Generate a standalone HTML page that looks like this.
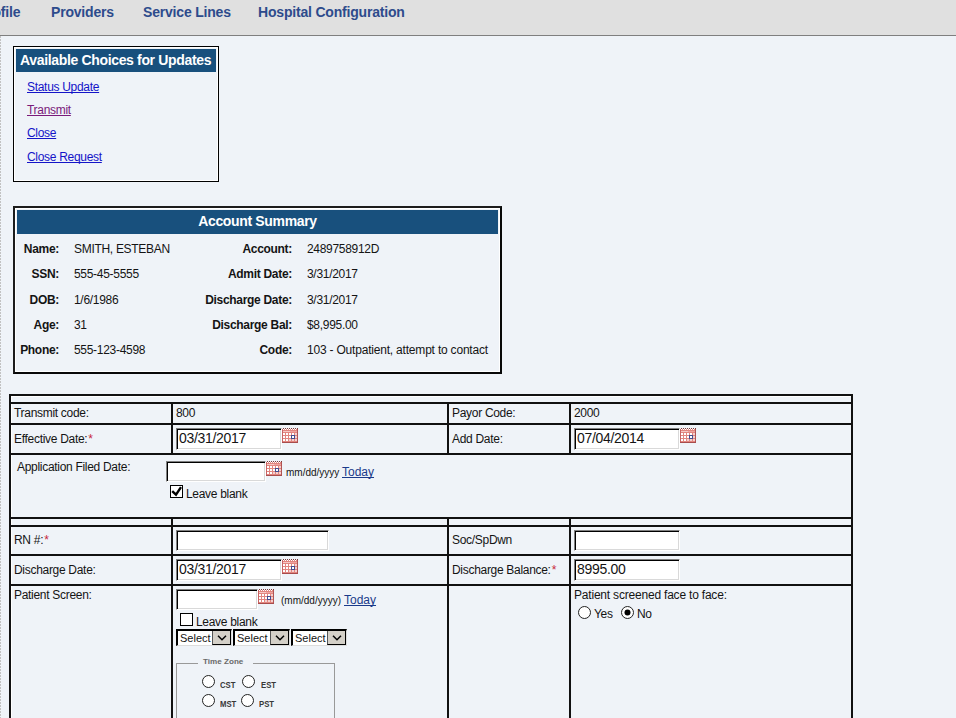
<!DOCTYPE html>
<html><head><meta charset="utf-8">
<style>
html,body{margin:0;padding:0;}
body{width:956px;height:718px;overflow:hidden;position:relative;background:#eff3f8;font-family:"Liberation Sans",sans-serif;color:#141414;}
.a{position:absolute;white-space:nowrap;}
#nav{left:0;top:0;width:956px;height:35px;background:#e0e0e0;border-bottom:1px solid #7f7f7f;}
.nv{font-size:14px;letter-spacing:-0.19px;font-weight:bold;color:#2d4b8c;line-height:16px;top:4px;}
#dots{left:0;top:36px;width:1px;height:682px;background:repeating-linear-gradient(#c2c2c2 0 2px,transparent 2px 3px);}
.box1{left:13px;top:46px;width:204px;height:134px;border:1px solid #000;box-shadow:inset 0 0 0 1px #fff;}
.hdr{background:#18507d;color:#fff;font-size:14px;letter-spacing:-0.34px;font-weight:bold;line-height:16px;}
.lk{font-size:12px;letter-spacing:-0.3px;line-height:13px;color:#1414c8;text-decoration:underline;text-decoration-skip-ink:none;}
.box2{left:13px;top:206px;width:485px;height:164px;border:2px solid;border-color:#1c1c1c #080808 #080808 #1c1c1c;box-shadow:inset 0 0 0 1px #fff;}
.t{font-size:12px;line-height:13px;letter-spacing:-0.3px;}
.b{font-weight:bold;}
.r{text-align:right;}
.hl{background:#111;height:2px;}
.vl{background:#111;width:2px;}
.inp{background:#fff;border:1px solid;border-color:#808080 #fff #fff #808080;box-shadow:inset 1px 1px 0 #000,inset -1px -1px 0 #d9d9d9;box-sizing:border-box;}
.it{font-size:14px;letter-spacing:-0.3px;line-height:15px;}
.req{color:#c8283c;margin-left:1px;}
.sel{width:56px;height:17px;box-sizing:border-box;background:#fff;border-style:solid;border-width:2px 1px 1px 2px;border-color:#000 #dcdcdc #dcdcdc #000;}
.st{position:absolute;left:2px;top:1px;font-size:11px;line-height:13px;}
.sb{position:absolute;left:34px;top:0;width:19px;height:14px;background:#d4d0c8;border-right:1px solid #000;border-bottom:1px solid #000;border-left:1px solid #555;box-sizing:border-box;}
.sb svg{position:absolute;left:0;top:0;}
.fs{border:1px solid #999;}
.lg{font-size:8.1px;font-weight:bold;color:#6a6a6a;line-height:10px;}
.tz{font-size:9px;font-weight:bold;color:#383838;line-height:10px;transform:scaleX(.86);transform-origin:0 0;}
</style></head><body>
<div id="nav" class="a"></div>
<div class="a nv" style="left:-22px;">Profile</div>
<div class="a nv" style="left:51px;">Providers</div>
<div class="a nv" style="left:143px;">Service Lines</div>
<div class="a nv" style="left:258px;">Hospital Configuration</div>
<div id="dots" class="a"></div>

<div class="a box1"></div>
<div class="a hdr" style="left:16px;top:49px;width:200px;height:23px;"></div>
<div class="a hdr" style="left:20px;top:52px;">Available Choices for Updates</div>
<div class="a lk" style="left:27px;top:81px;">Status Update</div>
<div class="a lk" style="left:27px;top:104px;color:#7a1a7a;">Transmit</div>
<div class="a lk" style="left:27px;top:127px;">Close</div>
<div class="a lk" style="left:27px;top:151px;">Close Request</div>

<div class="a box2"></div>
<div class="a hdr" style="left:17px;top:210px;width:481px;height:24px;text-align:center;line-height:22px;">Account Summary</div>
<div class="a t b r" style="left:0;width:59px;top:243px;">Name:</div>
<div class="a t b r" style="left:0;width:59px;top:268px;">SSN:</div>
<div class="a t b r" style="left:0;width:59px;top:294px;">DOB:</div>
<div class="a t b r" style="left:0;width:59px;top:319px;">Age:</div>
<div class="a t b r" style="left:0;width:59px;top:344px;">Phone:</div>
<div class="a t" style="left:74px;top:243px;">SMITH, ESTEBAN</div>
<div class="a t" style="left:74px;top:268px;">555-45-5555</div>
<div class="a t" style="left:74px;top:294px;">1/6/1986</div>
<div class="a t" style="left:74px;top:319px;">31</div>
<div class="a t" style="left:74px;top:344px;">555-123-4598</div>
<div class="a t b r" style="left:100px;width:192px;top:243px;">Account:</div>
<div class="a t b r" style="left:100px;width:192px;top:268px;">Admit Date:</div>
<div class="a t b r" style="left:100px;width:192px;top:294px;">Discharge Date:</div>
<div class="a t b r" style="left:100px;width:192px;top:319px;">Discharge Bal:</div>
<div class="a t b r" style="left:100px;width:192px;top:344px;">Code:</div>
<div class="a t" style="left:307px;top:243px;">2489758912D</div>
<div class="a t" style="left:307px;top:268px;">3/31/2017</div>
<div class="a t" style="left:307px;top:294px;">3/31/2017</div>
<div class="a t" style="left:307px;top:319px;">$8,995.00</div>
<div class="a t" style="left:307px;top:344px;letter-spacing:-0.2px;">103 - Outpatient, attempt to contact</div>

<div class="a" style="left:9px;top:394px;width:840px;height:400px;border:2px solid #111;border-bottom:none;box-shadow:inset 1px 1px 0 #fff;"></div>
<div class="a hl" style="left:9px;top:402px;width:844px;"></div>
<div class="a hl" style="left:9px;top:423px;width:844px;"></div>
<div class="a hl" style="left:9px;top:453px;width:844px;"></div>
<div class="a hl" style="left:9px;top:517px;width:844px;"></div>
<div class="a hl" style="left:9px;top:525px;width:844px;"></div>
<div class="a hl" style="left:9px;top:554px;width:844px;"></div>
<div class="a hl" style="left:9px;top:584px;width:844px;"></div>
<div class="a vl" style="left:171px;top:402px;height:53px;"></div>
<div class="a vl" style="left:447px;top:402px;height:53px;"></div>
<div class="a vl" style="left:569px;top:402px;height:53px;"></div>
<div class="a vl" style="left:171px;top:517px;height:201px;"></div>
<div class="a vl" style="left:447px;top:517px;height:201px;"></div>
<div class="a vl" style="left:569px;top:517px;height:201px;"></div>

<div class="a t" style="left:14px;top:407px;">Transmit code:</div>
<div class="a t" style="left:176px;top:407px;">800</div>
<div class="a t" style="left:452px;top:407px;">Payor Code:</div>
<div class="a t" style="left:574px;top:407px;">2000</div>

<div class="a t" style="left:14px;top:433px;">Effective Date:<span class="req">*</span></div>
<div class="a inp" style="left:176px;top:428px;width:106px;height:22px;"></div><div class="a it" style="left:179px;top:431px;">03/31/2017</div>
<svg class="a" style="left:282px;top:428px" width="16" height="15" viewBox="0 0 16 15" shape-rendering="crispEdges">
<rect x="0" y="1" width="16" height="14" fill="#e2867f"/>
<rect x="1" y="0" width="1" height="1" fill="#7a3a3a"/><rect x="3" y="0" width="1" height="1" fill="#7a3a3a"/><rect x="5" y="0" width="1" height="1" fill="#7a3a3a"/><rect x="7" y="0" width="1" height="1" fill="#7a3a3a"/><rect x="9" y="0" width="1" height="1" fill="#7a3a3a"/><rect x="11" y="0" width="1" height="1" fill="#7a3a3a"/><rect x="13" y="0" width="1" height="1" fill="#7a3a3a"/><rect x="15" y="0" width="1" height="1" fill="#7a3a3a"/>
<rect x="1" y="1" width="1" height="1" fill="#fff"/><rect x="3" y="1" width="1" height="1" fill="#fff"/><rect x="5" y="1" width="1" height="1" fill="#fff"/><rect x="7" y="1" width="1" height="1" fill="#fff"/><rect x="9" y="1" width="1" height="1" fill="#fff"/><rect x="11" y="1" width="1" height="1" fill="#fff"/><rect x="13" y="1" width="1" height="1" fill="#fff"/>
<rect x="1" y="3" width="7" height="1" fill="#f6c8c4"/><rect x="8" y="3" width="7" height="1" fill="#eea4a0"/>
<g fill="#fff"><rect x="1" y="5" width="2" height="2"/><rect x="4" y="5" width="2" height="2"/><rect x="7" y="5" width="2" height="2"/><rect x="10" y="5" width="2" height="2"/>
<rect x="1" y="8" width="2" height="2"/><rect x="4" y="8" width="2" height="2"/><rect x="7" y="8" width="2" height="2"/>
<rect x="1" y="11" width="2" height="2"/><rect x="4" y="11" width="2" height="2"/></g>
<g fill="#f4d0d0"><rect x="13" y="5" width="2" height="2"/><rect x="13" y="8" width="2" height="2"/><rect x="7" y="11" width="2" height="2"/><rect x="10" y="11" width="2" height="2"/><rect x="13" y="11" width="2" height="2"/></g>
<rect x="9" y="7" width="4" height="4" fill="#434d8e"/><rect x="10" y="8" width="2" height="2" fill="#fff"/>
<rect x="0" y="1" width="1" height="14" fill="#c86464"/><rect x="15" y="1" width="1" height="14" fill="#b05454"/>
<rect x="0" y="14" width="16" height="1" fill="#a84c4c"/>
</svg>
<div class="a t" style="left:452px;top:433px;">Add Date:</div>
<div class="a inp" style="left:574px;top:428px;width:106px;height:22px;"></div><div class="a it" style="left:577px;top:431px;">07/04/2014</div>
<svg class="a" style="left:680px;top:428px" width="16" height="15" viewBox="0 0 16 15" shape-rendering="crispEdges">
<rect x="0" y="1" width="16" height="14" fill="#e2867f"/>
<rect x="1" y="0" width="1" height="1" fill="#7a3a3a"/><rect x="3" y="0" width="1" height="1" fill="#7a3a3a"/><rect x="5" y="0" width="1" height="1" fill="#7a3a3a"/><rect x="7" y="0" width="1" height="1" fill="#7a3a3a"/><rect x="9" y="0" width="1" height="1" fill="#7a3a3a"/><rect x="11" y="0" width="1" height="1" fill="#7a3a3a"/><rect x="13" y="0" width="1" height="1" fill="#7a3a3a"/><rect x="15" y="0" width="1" height="1" fill="#7a3a3a"/>
<rect x="1" y="1" width="1" height="1" fill="#fff"/><rect x="3" y="1" width="1" height="1" fill="#fff"/><rect x="5" y="1" width="1" height="1" fill="#fff"/><rect x="7" y="1" width="1" height="1" fill="#fff"/><rect x="9" y="1" width="1" height="1" fill="#fff"/><rect x="11" y="1" width="1" height="1" fill="#fff"/><rect x="13" y="1" width="1" height="1" fill="#fff"/>
<rect x="1" y="3" width="7" height="1" fill="#f6c8c4"/><rect x="8" y="3" width="7" height="1" fill="#eea4a0"/>
<g fill="#fff"><rect x="1" y="5" width="2" height="2"/><rect x="4" y="5" width="2" height="2"/><rect x="7" y="5" width="2" height="2"/><rect x="10" y="5" width="2" height="2"/>
<rect x="1" y="8" width="2" height="2"/><rect x="4" y="8" width="2" height="2"/><rect x="7" y="8" width="2" height="2"/>
<rect x="1" y="11" width="2" height="2"/><rect x="4" y="11" width="2" height="2"/></g>
<g fill="#f4d0d0"><rect x="13" y="5" width="2" height="2"/><rect x="13" y="8" width="2" height="2"/><rect x="7" y="11" width="2" height="2"/><rect x="10" y="11" width="2" height="2"/><rect x="13" y="11" width="2" height="2"/></g>
<rect x="9" y="7" width="4" height="4" fill="#434d8e"/><rect x="10" y="8" width="2" height="2" fill="#fff"/>
<rect x="0" y="1" width="1" height="14" fill="#c86464"/><rect x="15" y="1" width="1" height="14" fill="#b05454"/>
<rect x="0" y="14" width="16" height="1" fill="#a84c4c"/>
</svg>

<div class="a t" style="left:17px;top:461px;">Application Filed Date:</div>
<div class="a inp" style="left:166px;top:461px;width:100px;height:21px;"></div>
<svg class="a" style="left:266px;top:461px" width="16" height="15" viewBox="0 0 16 15" shape-rendering="crispEdges">
<rect x="0" y="1" width="16" height="14" fill="#e2867f"/>
<rect x="1" y="0" width="1" height="1" fill="#7a3a3a"/><rect x="3" y="0" width="1" height="1" fill="#7a3a3a"/><rect x="5" y="0" width="1" height="1" fill="#7a3a3a"/><rect x="7" y="0" width="1" height="1" fill="#7a3a3a"/><rect x="9" y="0" width="1" height="1" fill="#7a3a3a"/><rect x="11" y="0" width="1" height="1" fill="#7a3a3a"/><rect x="13" y="0" width="1" height="1" fill="#7a3a3a"/><rect x="15" y="0" width="1" height="1" fill="#7a3a3a"/>
<rect x="1" y="1" width="1" height="1" fill="#fff"/><rect x="3" y="1" width="1" height="1" fill="#fff"/><rect x="5" y="1" width="1" height="1" fill="#fff"/><rect x="7" y="1" width="1" height="1" fill="#fff"/><rect x="9" y="1" width="1" height="1" fill="#fff"/><rect x="11" y="1" width="1" height="1" fill="#fff"/><rect x="13" y="1" width="1" height="1" fill="#fff"/>
<rect x="1" y="3" width="7" height="1" fill="#f6c8c4"/><rect x="8" y="3" width="7" height="1" fill="#eea4a0"/>
<g fill="#fff"><rect x="1" y="5" width="2" height="2"/><rect x="4" y="5" width="2" height="2"/><rect x="7" y="5" width="2" height="2"/><rect x="10" y="5" width="2" height="2"/>
<rect x="1" y="8" width="2" height="2"/><rect x="4" y="8" width="2" height="2"/><rect x="7" y="8" width="2" height="2"/>
<rect x="1" y="11" width="2" height="2"/><rect x="4" y="11" width="2" height="2"/></g>
<g fill="#f4d0d0"><rect x="13" y="5" width="2" height="2"/><rect x="13" y="8" width="2" height="2"/><rect x="7" y="11" width="2" height="2"/><rect x="10" y="11" width="2" height="2"/><rect x="13" y="11" width="2" height="2"/></g>
<rect x="9" y="7" width="4" height="4" fill="#434d8e"/><rect x="10" y="8" width="2" height="2" fill="#fff"/>
<rect x="0" y="1" width="1" height="14" fill="#c86464"/><rect x="15" y="1" width="1" height="14" fill="#b05454"/>
<rect x="0" y="14" width="16" height="1" fill="#a84c4c"/>
</svg>
<div class="a" style="left:286px;top:467px;font-size:10px;line-height:11px;">mm/dd/yyyy</div>
<div class="a lk" style="left:342px;top:466px;letter-spacing:0;color:#1a3a8a;">Today</div>
<div class="a" style="left:170px;top:485px;width:11px;height:11px;border:1px solid #000;background:#fff;"></div><svg class="a" style="left:170px;top:485px" width="13" height="13" viewBox="0 0 13 13"><path d="M2.2 6.1 L6 9.7 L11 2.2" fill="none" stroke="#000" stroke-width="2.4"/></svg>
<div class="a t" style="left:186px;top:488px;">Leave blank</div>

<div class="a t" style="left:14px;top:534px;">RN #:<span class="req">*</span></div>
<div class="a inp" style="left:176px;top:530px;width:153px;height:21px;"></div>
<div class="a t" style="left:452px;top:534px;">Soc/SpDwn</div>
<div class="a inp" style="left:574px;top:530px;width:106px;height:21px;"></div>

<div class="a t" style="left:14px;top:564px;">Discharge Date:</div>
<div class="a inp" style="left:176px;top:559px;width:106px;height:22px;"></div><div class="a it" style="left:179px;top:562px;">03/31/2017</div>
<svg class="a" style="left:282px;top:559px" width="16" height="15" viewBox="0 0 16 15" shape-rendering="crispEdges">
<rect x="0" y="1" width="16" height="14" fill="#e2867f"/>
<rect x="1" y="0" width="1" height="1" fill="#7a3a3a"/><rect x="3" y="0" width="1" height="1" fill="#7a3a3a"/><rect x="5" y="0" width="1" height="1" fill="#7a3a3a"/><rect x="7" y="0" width="1" height="1" fill="#7a3a3a"/><rect x="9" y="0" width="1" height="1" fill="#7a3a3a"/><rect x="11" y="0" width="1" height="1" fill="#7a3a3a"/><rect x="13" y="0" width="1" height="1" fill="#7a3a3a"/><rect x="15" y="0" width="1" height="1" fill="#7a3a3a"/>
<rect x="1" y="1" width="1" height="1" fill="#fff"/><rect x="3" y="1" width="1" height="1" fill="#fff"/><rect x="5" y="1" width="1" height="1" fill="#fff"/><rect x="7" y="1" width="1" height="1" fill="#fff"/><rect x="9" y="1" width="1" height="1" fill="#fff"/><rect x="11" y="1" width="1" height="1" fill="#fff"/><rect x="13" y="1" width="1" height="1" fill="#fff"/>
<rect x="1" y="3" width="7" height="1" fill="#f6c8c4"/><rect x="8" y="3" width="7" height="1" fill="#eea4a0"/>
<g fill="#fff"><rect x="1" y="5" width="2" height="2"/><rect x="4" y="5" width="2" height="2"/><rect x="7" y="5" width="2" height="2"/><rect x="10" y="5" width="2" height="2"/>
<rect x="1" y="8" width="2" height="2"/><rect x="4" y="8" width="2" height="2"/><rect x="7" y="8" width="2" height="2"/>
<rect x="1" y="11" width="2" height="2"/><rect x="4" y="11" width="2" height="2"/></g>
<g fill="#f4d0d0"><rect x="13" y="5" width="2" height="2"/><rect x="13" y="8" width="2" height="2"/><rect x="7" y="11" width="2" height="2"/><rect x="10" y="11" width="2" height="2"/><rect x="13" y="11" width="2" height="2"/></g>
<rect x="9" y="7" width="4" height="4" fill="#434d8e"/><rect x="10" y="8" width="2" height="2" fill="#fff"/>
<rect x="0" y="1" width="1" height="14" fill="#c86464"/><rect x="15" y="1" width="1" height="14" fill="#b05454"/>
<rect x="0" y="14" width="16" height="1" fill="#a84c4c"/>
</svg>
<div class="a t" style="left:452px;top:564px;">Discharge Balance:<span class="req">*</span></div>
<div class="a inp" style="left:574px;top:559px;width:106px;height:22px;"></div><div class="a it" style="left:577px;top:562px;">8995.00</div>

<div class="a t" style="left:14px;top:589px;">Patient Screen:</div>
<div class="a inp" style="left:176px;top:589px;width:82px;height:21px;"></div>
<svg class="a" style="left:258px;top:589px" width="16" height="15" viewBox="0 0 16 15" shape-rendering="crispEdges">
<rect x="0" y="1" width="16" height="14" fill="#e2867f"/>
<rect x="1" y="0" width="1" height="1" fill="#7a3a3a"/><rect x="3" y="0" width="1" height="1" fill="#7a3a3a"/><rect x="5" y="0" width="1" height="1" fill="#7a3a3a"/><rect x="7" y="0" width="1" height="1" fill="#7a3a3a"/><rect x="9" y="0" width="1" height="1" fill="#7a3a3a"/><rect x="11" y="0" width="1" height="1" fill="#7a3a3a"/><rect x="13" y="0" width="1" height="1" fill="#7a3a3a"/><rect x="15" y="0" width="1" height="1" fill="#7a3a3a"/>
<rect x="1" y="1" width="1" height="1" fill="#fff"/><rect x="3" y="1" width="1" height="1" fill="#fff"/><rect x="5" y="1" width="1" height="1" fill="#fff"/><rect x="7" y="1" width="1" height="1" fill="#fff"/><rect x="9" y="1" width="1" height="1" fill="#fff"/><rect x="11" y="1" width="1" height="1" fill="#fff"/><rect x="13" y="1" width="1" height="1" fill="#fff"/>
<rect x="1" y="3" width="7" height="1" fill="#f6c8c4"/><rect x="8" y="3" width="7" height="1" fill="#eea4a0"/>
<g fill="#fff"><rect x="1" y="5" width="2" height="2"/><rect x="4" y="5" width="2" height="2"/><rect x="7" y="5" width="2" height="2"/><rect x="10" y="5" width="2" height="2"/>
<rect x="1" y="8" width="2" height="2"/><rect x="4" y="8" width="2" height="2"/><rect x="7" y="8" width="2" height="2"/>
<rect x="1" y="11" width="2" height="2"/><rect x="4" y="11" width="2" height="2"/></g>
<g fill="#f4d0d0"><rect x="13" y="5" width="2" height="2"/><rect x="13" y="8" width="2" height="2"/><rect x="7" y="11" width="2" height="2"/><rect x="10" y="11" width="2" height="2"/><rect x="13" y="11" width="2" height="2"/></g>
<rect x="9" y="7" width="4" height="4" fill="#434d8e"/><rect x="10" y="8" width="2" height="2" fill="#fff"/>
<rect x="0" y="1" width="1" height="14" fill="#c86464"/><rect x="15" y="1" width="1" height="14" fill="#b05454"/>
<rect x="0" y="14" width="16" height="1" fill="#a84c4c"/>
</svg>
<div class="a" style="left:281px;top:595px;font-size:10px;line-height:11px;">(mm/dd/yyyy)</div>
<div class="a lk" style="left:344px;top:594px;letter-spacing:0;color:#1a3a8a;">Today</div>
<div class="a" style="left:180px;top:613px;width:11px;height:11px;border:1px solid #000;background:#fff;"></div>
<div class="a t" style="left:196px;top:616px;">Leave blank</div>
<div class="a sel" style="left:176px;top:629px;width:56px"><div class="st">Select</div><div class="sb" style="left:34px"><svg width="18" height="13" viewBox="0 0 18 13"><path d="M5 4.8 L9 8.8 L13 4.8" fill="none" stroke="#000" stroke-width="1.5"/></svg></div></div>
<div class="a sel" style="left:233px;top:629px;width:57px"><div class="st">Select</div><div class="sb" style="left:35px"><svg width="18" height="13" viewBox="0 0 18 13"><path d="M5 4.8 L9 8.8 L13 4.8" fill="none" stroke="#000" stroke-width="1.5"/></svg></div></div>
<div class="a sel" style="left:291px;top:629px;width:56px"><div class="st">Select</div><div class="sb" style="left:34px"><svg width="18" height="13" viewBox="0 0 18 13"><path d="M5 4.8 L9 8.8 L13 4.8" fill="none" stroke="#000" stroke-width="1.5"/></svg></div></div>
<div class="a fs" style="left:176px;top:663px;width:157px;height:80px;"></div>
<div class="a lg" style="left:198px;top:657px;padding:0 10px 0 5px;background:#eff3f8;">Time Zone</div>
<svg class="a" style="left:202px;top:675px" width="13" height="13" viewBox="0 0 13 13"><circle cx="6.5" cy="6.5" r="6" fill="#fff" stroke="#222" stroke-width="1"/></svg>
<div class="a tz" style="left:220px;top:680px;">CST</div>
<svg class="a" style="left:242px;top:675px" width="13" height="13" viewBox="0 0 13 13"><circle cx="6.5" cy="6.5" r="6" fill="#fff" stroke="#222" stroke-width="1"/></svg>
<div class="a tz" style="left:261px;top:680px;">EST</div>
<svg class="a" style="left:202px;top:694px" width="13" height="13" viewBox="0 0 13 13"><circle cx="6.5" cy="6.5" r="6" fill="#fff" stroke="#222" stroke-width="1"/></svg>
<div class="a tz" style="left:220px;top:699px;">MST</div>
<svg class="a" style="left:241px;top:694px" width="13" height="13" viewBox="0 0 13 13"><circle cx="6.5" cy="6.5" r="6" fill="#fff" stroke="#222" stroke-width="1"/></svg>
<div class="a tz" style="left:259px;top:699px;">PST</div>

<div class="a t" style="left:574px;top:589px;letter-spacing:-0.2px;">Patient screened face to face:</div>
<svg class="a" style="left:578px;top:606px" width="13" height="13" viewBox="0 0 13 13"><circle cx="6.5" cy="6.5" r="6" fill="#fff" stroke="#222" stroke-width="1"/></svg>
<div class="a t" style="left:594px;top:608px;">Yes</div>
<svg class="a" style="left:621px;top:606px" width="13" height="13" viewBox="0 0 13 13"><circle cx="6.5" cy="6.5" r="6" fill="#fff" stroke="#222" stroke-width="1"/><circle cx="6.5" cy="6.5" r="3" fill="#000"/></svg>
<div class="a t" style="left:637px;top:608px;">No</div>
</body></html>
